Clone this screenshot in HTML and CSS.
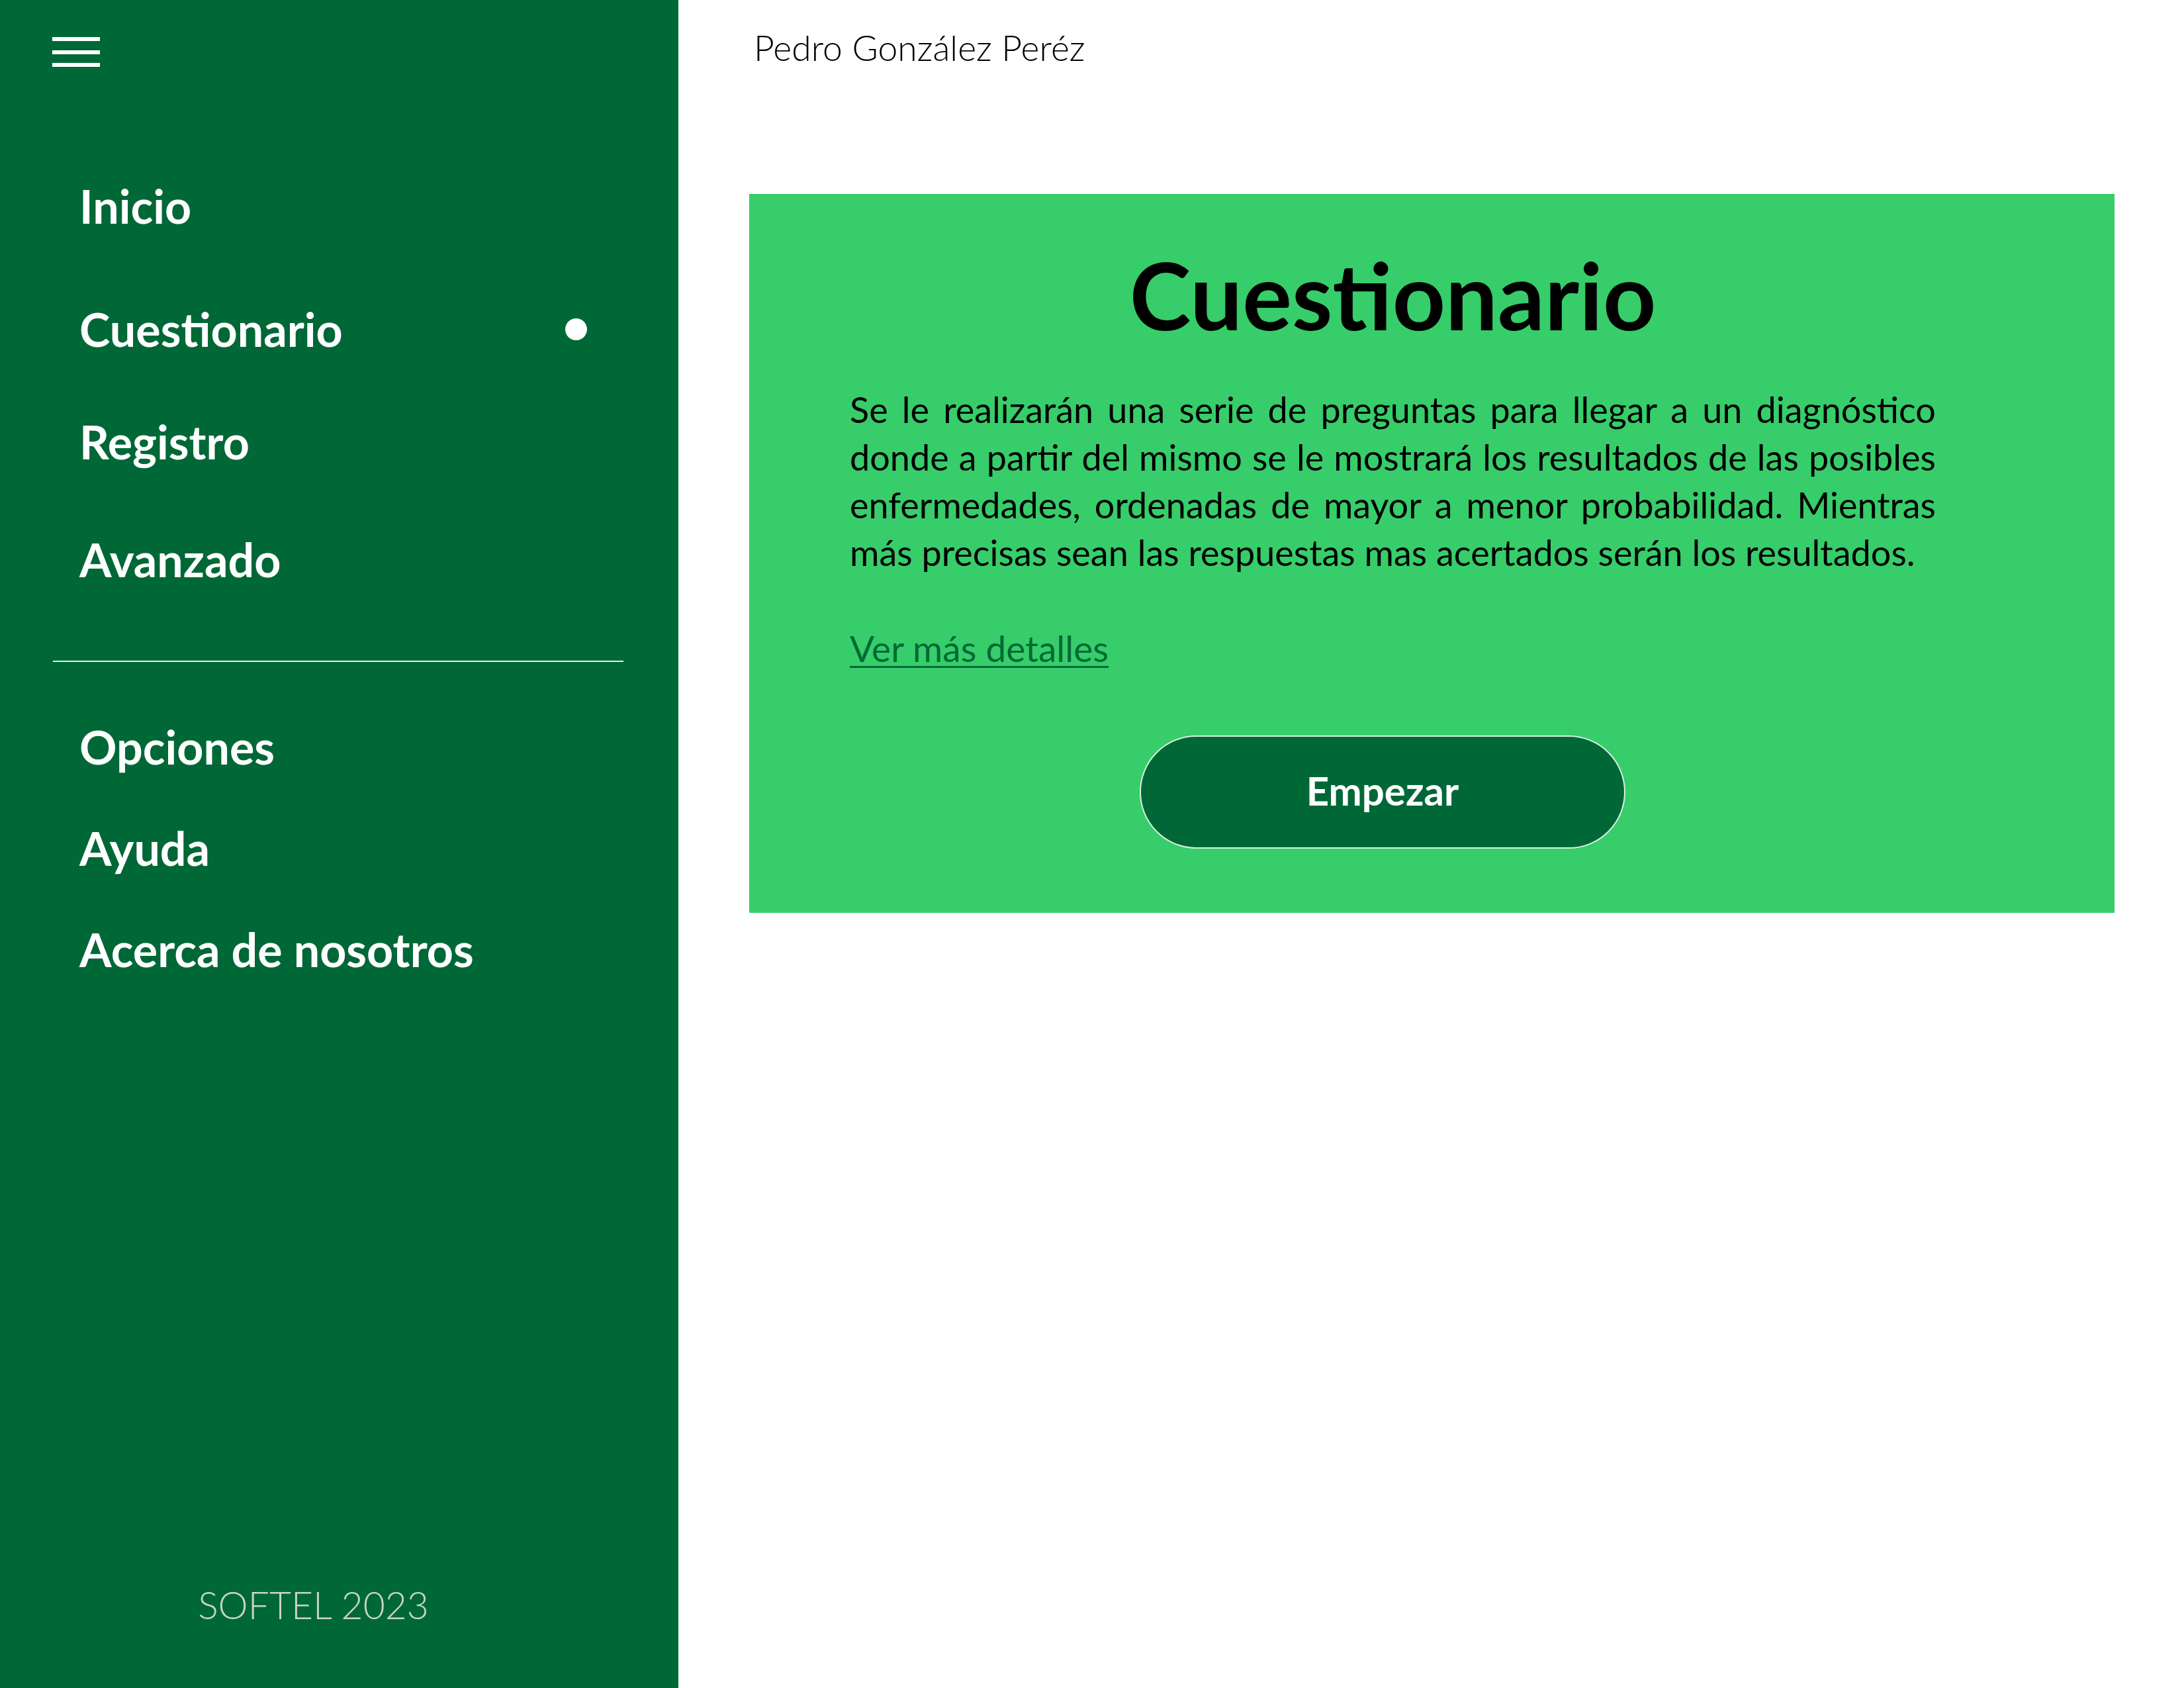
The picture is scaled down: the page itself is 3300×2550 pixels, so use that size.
FILE: index.html
```html
<!DOCTYPE html>
<html lang="es">
<head>
<meta charset="utf-8">
<title>Cuestionario</title>
<link rel="stylesheet" href="styles.css">
</head>
<body>
<div class="app">
  <aside class="sidebar">
    <button class="menu-btn" aria-label="Menú">
      <span class="bar"></span>
      <span class="bar"></span>
      <span class="bar"></span>
    </button>
    <nav class="nav nav-main">
      <a class="nav-item" href="#">Inicio</a>
      <a class="nav-item active" href="#">Cuestionario<span class="dot"></span></a>
      <a class="nav-item" href="#">Registro</a>
      <a class="nav-item" href="#">Avanzado</a>
    </nav>
    <hr class="divider">
    <nav class="nav nav-secondary">
      <a class="nav-item" href="#">Opciones</a>
      <a class="nav-item" href="#">Ayuda</a>
      <a class="nav-item" href="#">Acerca de nosotros</a>
    </nav>
    <div class="footer">SOFTEL 2023</div>
  </aside>
  <main class="main">
    <header class="user">Pedro González Peréz</header>
    <section class="card">
      <h1 class="card-title">Cuestionario</h1>
      <p class="card-text">Se le realizarán una serie de preguntas para llegar a un diagnóstico donde a partir del mismo se le mostrará los resultados de las posibles enfermedades, ordenadas de mayor a menor probabilidad. Mientras más precisas sean las respuestas mas acertados serán los resultados.</p>
      <a class="card-link" href="#">Ver más detalles</a>
      <button class="start-btn">Empezar</button>
    </section>
  </main>
</div>
</body>
</html>
```
FILE: styles.css
```css
* { box-sizing: border-box; }
html, body { margin: 0; padding: 0; }
body {
  font-family: "Lato", "Open Sans", sans-serif;
  background: #ffffff;
  color: #000;
}
.app {
  display: flex;
  width: 3300px;
  height: 2550px;
}
.sidebar {
  width: 1025px;
  flex: 0 0 1025px;
  background: #006837;
  display: flex;
  flex-direction: column;
  padding-top: 56px;
}
.menu-btn {
  background: none;
  border: 0;
  padding: 0;
  margin-left: 79px;
  width: 72px;
  display: flex;
  flex-direction: column;
  gap: 13.5px;
  cursor: pointer;
}
.bar {
  display: block;
  width: 72px;
  height: 6px;
  background: #ffffff;
}
.nav {
  display: flex;
  flex-direction: column;
}
.nav-main { margin-top: 121px; }
.nav-item {
  display: flex;
  align-items: center;
  justify-content: space-between;
  color: #ffffff;
  text-decoration: none;
  font-weight: 700;
  font-size: 70px;
  padding-left: 120px;
  padding-right: 138px;
}
.nav-main .nav-item { height: 178px; }
.nav-main .nav-item.active { height: 186px; margin-top: 4px; }
.nav-main .nav-item.active + .nav-item { height: 166px; padding-bottom: 12px; }
.nav-secondary .nav-item { height: 153px; }
.dot {
  width: 33px;
  height: 33px;
  border-radius: 50%;
  background: #ffffff;
}
.divider {
  margin: 64px 0 0 80px;
  width: 862px;
  height: 2px;
  border: 0;
  background: #e4f1e6;
}
.nav-secondary { margin-top: 51px; }
.footer {
  margin-top: auto;
  padding: 0 78px 86px 0;
  text-align: center;
  font-weight: 300;
  font-size: 57px;
  line-height: 80px;
  color: #c9d4ca;
}
.main {
  flex: 1;
  padding: 34px 105px 0 107px;
}
.user {
  padding-left: 7px;
  font-weight: 300;
  font-size: 53.5px;
  line-height: 74px;
}
.card {
  margin-top: 185px;
  background: #37cd6a;
  padding: 82px 270px 97px 152px;
  display: flex;
  flex-direction: column;
  align-items: flex-start;
}
.card-title {
  margin: 0;
  align-self: stretch;
  text-align: center;
  font-weight: 700;
  font-size: 140px;
  line-height: 140px;
}
.card-text {
  margin: 68px 0 0;
  font-size: 54px;
  line-height: 72px;
  text-align: justify;
}
.card-link {
  margin-top: 72px;
  font-size: 55px;
  line-height: 72px;
  color: #006a35;
  text-decoration: underline;
  text-decoration-thickness: 3px;
  text-underline-offset: 6px;
}
.start-btn {
  margin: 96px 0 0 438px;
  width: 734px;
  height: 171px;
  border-radius: 86px;
  background: #006837;
  border: 2px solid #d8f0dc;
  color: #ffffff;
  font-family: "Lato", "Open Sans", sans-serif;
  font-weight: 700;
  font-size: 60px;
  padding: 0 0 6px;
  cursor: pointer;
}
```
